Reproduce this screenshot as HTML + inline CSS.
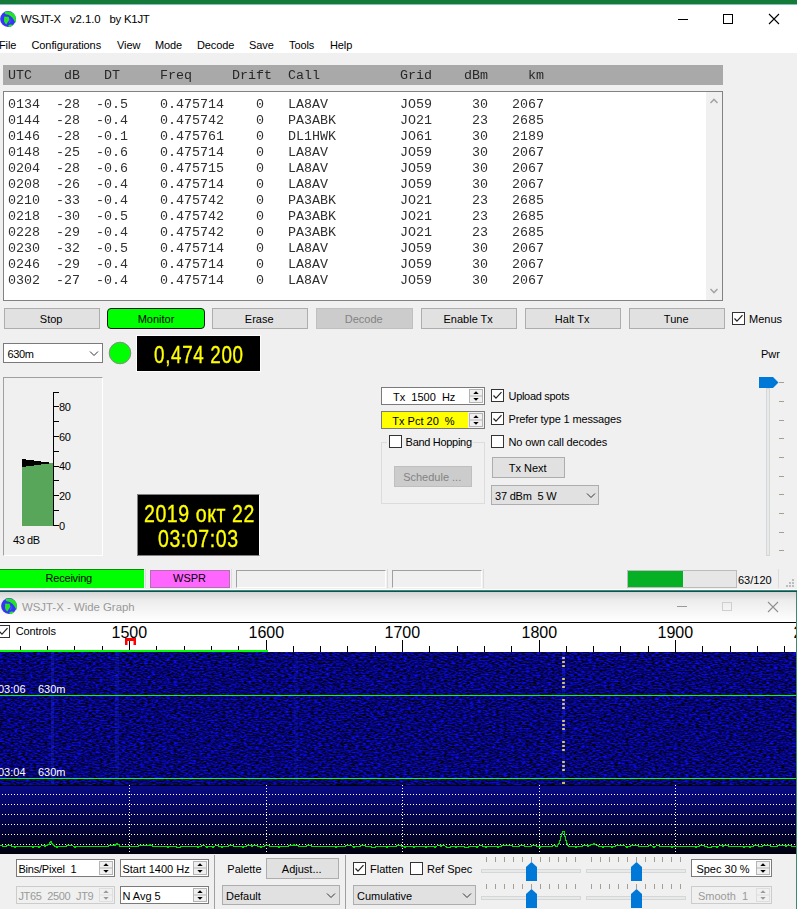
<!DOCTYPE html><html><head><meta charset="utf-8"><style>
html,body{margin:0;padding:0;}
body{width:797px;height:909px;position:relative;overflow:hidden;background:#f0f0f0;font-family:"Liberation Sans",sans-serif;}
.t{position:absolute;white-space:pre;}
.r{position:absolute;box-sizing:border-box;}
svg{position:absolute;}
</style></head><body>
<div class="r" style="left:0px;top:0px;width:797px;height:4px;background:#137a3a;"></div>
<div class="r" style="left:0px;top:4px;width:797px;height:49px;background:#ffffff;"></div>
<div class="r" style="left:0px;top:4px;width:797px;height:1px;background:#7cc0c4;"></div>
<svg style="left:0px;top:11px" width="16" height="16" viewBox="0 0 16 16">
<circle cx="8" cy="8" r="7.9" fill="#3535f5"/>
<path d="M4.5,1.2 C7.5,-0.3 12.5,0.6 15,4.2 C16,6.5 16.1,9.5 15.6,12 C14.6,10.5 13.8,8.5 12.6,7 C11.2,5 9,3.6 6.5,3.4 C5.5,3.3 4.6,2.5 4.5,1.2Z" fill="#22e622"/>
<path d="M4.2,5.8 C5.5,5 6.8,6.2 8,5.6 C9.3,6.3 9.6,8.6 8.8,9.8 C7.8,10.8 6.9,12.6 6.3,13.6 C5.2,12.6 4.1,11.2 4,9.2Z" fill="#22e622"/>
<path d="M8.2,14.6 C9.6,13 11.8,13.2 13.2,14 C12.2,15.4 10.4,16.1 9,16.1Z" fill="#22e622"/>
<path d="M9.5,8 C10.5,9 10.2,11 9.2,12" stroke="#7070ff" stroke-width="1" fill="none" opacity="0.6"/>
</svg>
<div class="t" style="left:21px;top:13.18px;font-size:11.4px;line-height:12.73px;color:#000;font-family:'Liberation Sans', sans-serif;letter-spacing:-0.35px;">WSJT-X</div>
<div class="t" style="left:70px;top:13.18px;font-size:11.4px;line-height:12.73px;color:#000;font-family:'Liberation Sans', sans-serif;letter-spacing:-0.1px;">v2.1.0</div>
<div class="t" style="left:109.5px;top:13.18px;font-size:11.4px;line-height:12.73px;color:#000;font-family:'Liberation Sans', sans-serif;letter-spacing:-0.25px;">by K1JT</div>
<div class="r" style="left:678px;top:19px;width:10px;height:1px;background:#000;"></div>
<div class="r" style="left:723px;top:14px;width:10px;height:10px;border:1px solid #000;"></div>
<svg style="left:768px;top:13px" width="12" height="12" viewBox="0 0 12 12"><path d="M1,1 L11,11 M11,1 L1,11" stroke="#000" stroke-width="1.1"/></svg>
<div class="t" style="left:-1px;top:38.75px;font-size:11px;line-height:12.29px;color:#000;font-family:'Liberation Sans', sans-serif;letter-spacing:-0.1px;">File</div>
<div class="t" style="left:31.5px;top:38.75px;font-size:11px;line-height:12.29px;color:#000;font-family:'Liberation Sans', sans-serif;letter-spacing:-0.1px;">Configurations</div>
<div class="t" style="left:117px;top:38.75px;font-size:11px;line-height:12.29px;color:#000;font-family:'Liberation Sans', sans-serif;letter-spacing:-0.1px;">View</div>
<div class="t" style="left:155px;top:38.75px;font-size:11px;line-height:12.29px;color:#000;font-family:'Liberation Sans', sans-serif;letter-spacing:-0.1px;">Mode</div>
<div class="t" style="left:197px;top:38.75px;font-size:11px;line-height:12.29px;color:#000;font-family:'Liberation Sans', sans-serif;letter-spacing:-0.1px;">Decode</div>
<div class="t" style="left:249px;top:38.75px;font-size:11px;line-height:12.29px;color:#000;font-family:'Liberation Sans', sans-serif;letter-spacing:-0.1px;">Save</div>
<div class="t" style="left:289px;top:38.75px;font-size:11px;line-height:12.29px;color:#000;font-family:'Liberation Sans', sans-serif;letter-spacing:-0.1px;">Tools</div>
<div class="t" style="left:330px;top:38.75px;font-size:11px;line-height:12.29px;color:#000;font-family:'Liberation Sans', sans-serif;letter-spacing:-0.1px;">Help</div>
<div class="r" style="left:3px;top:65px;width:720px;height:20px;background:#a9a9a9;"></div>
<div class="t" style="left:8px;top:68.10px;font-size:13.33px;line-height:15.10px;color:#282828;font-family:'Liberation Mono', monospace;transform:scaleY(0.9);transform-origin:0 100%;">UTC    dB   DT     Freq     Drift  Call          Grid    dBm     km</div>
<div class="r" style="left:3px;top:91px;width:720px;height:210px;background:#fff;border:1px solid #828282;"></div>
<div class="r" style="left:706px;top:92px;width:16px;height:208px;background:#f0f0f0;"></div>
<svg style="left:709px;top:97px" width="10" height="8" viewBox="0 0 10 8"><path d="M1.5,6 L5,2.5 L8.5,6" stroke="#a6a6a6" stroke-width="1.6" fill="none"/></svg>
<svg style="left:709px;top:287px" width="10" height="8" viewBox="0 0 10 8"><path d="M1.5,2 L5,5.5 L8.5,2" stroke="#a6a6a6" stroke-width="1.6" fill="none"/></svg>
<div class="t" style="left:8px;top:97.20px;font-size:13.33px;line-height:15.10px;color:#303030;font-family:'Liberation Mono', monospace;transform:scaleY(0.9);transform-origin:0 100%;">0134  -28  -0.5    0.475714    0   LA8AV         JO59     30   2067</div>
<div class="t" style="left:8px;top:113.20px;font-size:13.33px;line-height:15.10px;color:#303030;font-family:'Liberation Mono', monospace;transform:scaleY(0.9);transform-origin:0 100%;">0144  -28  -0.4    0.475742    0   PA3ABK        JO21     23   2685</div>
<div class="t" style="left:8px;top:129.20px;font-size:13.33px;line-height:15.10px;color:#303030;font-family:'Liberation Mono', monospace;transform:scaleY(0.9);transform-origin:0 100%;">0146  -28  -0.1    0.475761    0   DL1HWK        JO61     30   2189</div>
<div class="t" style="left:8px;top:145.20px;font-size:13.33px;line-height:15.10px;color:#303030;font-family:'Liberation Mono', monospace;transform:scaleY(0.9);transform-origin:0 100%;">0148  -25  -0.6    0.475714    0   LA8AV         JO59     30   2067</div>
<div class="t" style="left:8px;top:161.20px;font-size:13.33px;line-height:15.10px;color:#303030;font-family:'Liberation Mono', monospace;transform:scaleY(0.9);transform-origin:0 100%;">0204  -28  -0.6    0.475715    0   LA8AV         JO59     30   2067</div>
<div class="t" style="left:8px;top:177.20px;font-size:13.33px;line-height:15.10px;color:#303030;font-family:'Liberation Mono', monospace;transform:scaleY(0.9);transform-origin:0 100%;">0208  -26  -0.4    0.475714    0   LA8AV         JO59     30   2067</div>
<div class="t" style="left:8px;top:193.20px;font-size:13.33px;line-height:15.10px;color:#303030;font-family:'Liberation Mono', monospace;transform:scaleY(0.9);transform-origin:0 100%;">0210  -33  -0.4    0.475742    0   PA3ABK        JO21     23   2685</div>
<div class="t" style="left:8px;top:209.20px;font-size:13.33px;line-height:15.10px;color:#303030;font-family:'Liberation Mono', monospace;transform:scaleY(0.9);transform-origin:0 100%;">0218  -30  -0.5    0.475742    0   PA3ABK        JO21     23   2685</div>
<div class="t" style="left:8px;top:225.20px;font-size:13.33px;line-height:15.10px;color:#303030;font-family:'Liberation Mono', monospace;transform:scaleY(0.9);transform-origin:0 100%;">0228  -29  -0.4    0.475742    0   PA3ABK        JO21     23   2685</div>
<div class="t" style="left:8px;top:241.20px;font-size:13.33px;line-height:15.10px;color:#303030;font-family:'Liberation Mono', monospace;transform:scaleY(0.9);transform-origin:0 100%;">0230  -32  -0.5    0.475714    0   LA8AV         JO59     30   2067</div>
<div class="t" style="left:8px;top:257.20px;font-size:13.33px;line-height:15.10px;color:#303030;font-family:'Liberation Mono', monospace;transform:scaleY(0.9);transform-origin:0 100%;">0246  -29  -0.4    0.475714    0   LA8AV         JO59     30   2067</div>
<div class="t" style="left:8px;top:273.20px;font-size:13.33px;line-height:15.10px;color:#303030;font-family:'Liberation Mono', monospace;transform:scaleY(0.9);transform-origin:0 100%;">0302  -27  -0.4    0.475714    0   LA8AV         JO59     30   2067</div>
<div class="r" style="left:4px;top:308px;width:96px;height:21px;background:#e1e1e1;border:1px solid #adadad;"></div>
<div class="t" style="left:3.200000000000003px;width:96px;text-align:center;top:312.55px;font-size:11px;line-height:12.29px;color:#000;font-family:'Liberation Sans', sans-serif;">Stop</div>
<div class="r" style="left:107px;top:308px;width:98px;height:21px;background:#00ff00;border:1px solid #1a1a1a;border-radius:4px;"></div>
<div class="t" style="left:107.0px;width:98px;text-align:center;top:312.55px;font-size:11px;line-height:12.29px;color:#000;font-family:'Liberation Sans', sans-serif;">Monitor</div>
<div class="r" style="left:212px;top:308px;width:96px;height:21px;background:#e1e1e1;border:1px solid #adadad;"></div>
<div class="t" style="left:211.2px;width:96px;text-align:center;top:312.55px;font-size:11px;line-height:12.29px;color:#000;font-family:'Liberation Sans', sans-serif;">Erase</div>
<div class="r" style="left:316px;top:308px;width:97px;height:21px;background:#cccccc;border:1px solid #bfbfbf;"></div>
<div class="t" style="left:315.2px;width:97px;text-align:center;top:312.55px;font-size:11px;line-height:12.29px;color:#838383;font-family:'Liberation Sans', sans-serif;">Decode</div>
<div class="r" style="left:421px;top:308px;width:96px;height:21px;background:#e1e1e1;border:1px solid #adadad;"></div>
<div class="t" style="left:420.2px;width:96px;text-align:center;top:312.55px;font-size:11px;line-height:12.29px;color:#000;font-family:'Liberation Sans', sans-serif;">Enable Tx</div>
<div class="r" style="left:525px;top:308px;width:96px;height:21px;background:#e1e1e1;border:1px solid #adadad;"></div>
<div class="t" style="left:524.2px;width:96px;text-align:center;top:312.55px;font-size:11px;line-height:12.29px;color:#000;font-family:'Liberation Sans', sans-serif;">Halt Tx</div>
<div class="r" style="left:629px;top:308px;width:96px;height:21px;background:#e1e1e1;border:1px solid #adadad;"></div>
<div class="t" style="left:628.2px;width:96px;text-align:center;top:312.55px;font-size:11px;line-height:12.29px;color:#000;font-family:'Liberation Sans', sans-serif;">Tune</div>
<div class="r" style="left:732px;top:312px;width:13px;height:13px;background:#fff;border:1px solid #333;"></div>
<svg style="left:732px;top:312px" width="13" height="13" viewBox="0 0 13 13"><path d="M2.5,6.5 L5,9.2 L10.5,3.2" stroke="#222" stroke-width="1.2" fill="none"/></svg>
<div class="t" style="left:749px;top:312.75px;font-size:11px;line-height:12.29px;color:#000;font-family:'Liberation Sans', sans-serif;">Menus</div>
<div class="r" style="left:3px;top:343px;width:100px;height:20px;background:#fff;border:1px solid #7a7a7a;"></div>
<div class="t" style="left:7.4px;top:347.85px;font-size:11px;line-height:12.29px;color:#000;font-family:'Liberation Sans', sans-serif;letter-spacing:-0.3px;">630m</div>
<svg style="left:89px;top:350px" width="10" height="7" viewBox="0 0 10 7"><path d="M1,1.5 L5,5.5 L9,1.5" stroke="#333" stroke-width="1" fill="none"/></svg>
<svg style="left:108px;top:341px" width="24" height="24" viewBox="0 0 24 24"><circle cx="12" cy="12" r="10.8" fill="#00ff00" stroke="#8a8a8a" stroke-width="1"/></svg>
<div class="r" style="left:136px;top:335px;width:125px;height:37px;background:#000;border:1px solid #fdfdfd;"></div>
<div class="t" style="left:153.5px;top:341.73px;font-size:23.5px;line-height:26.25px;color:#ffff00;font-family:'Liberation Sans', sans-serif;letter-spacing:0.85px;-webkit-text-stroke:0.35px #ffff00;transform:scaleX(0.8);transform-origin:0 0;">0,474 200</div>
<div class="t" style="left:761px;top:348.05px;font-size:11px;line-height:12.29px;color:#000;font-family:'Liberation Sans', sans-serif;">Pwr</div>
<div class="r" style="left:3px;top:377px;width:100px;height:179px;border-top:1px solid #a0a0a0;border-left:1px solid #a0a0a0;border-right:1px solid #fff;border-bottom:1px solid #fff;"></div>
<div class="r" style="left:22px;top:467px;width:4px;height:58.60000000000002px;background:#58a65a;"></div>
<div class="r" style="left:22px;top:459px;width:4px;height:8px;background:#000;"></div>
<div class="r" style="left:26px;top:466px;width:8px;height:59.60000000000002px;background:#58a65a;"></div>
<div class="r" style="left:26px;top:459.6px;width:8px;height:6.399999999999977px;background:#000;"></div>
<div class="r" style="left:34px;top:465px;width:7px;height:60.60000000000002px;background:#58a65a;"></div>
<div class="r" style="left:34px;top:460.8px;width:7px;height:4.199999999999989px;background:#000;"></div>
<div class="r" style="left:41px;top:464px;width:8px;height:61.60000000000002px;background:#58a65a;"></div>
<div class="r" style="left:41px;top:462px;width:8px;height:2px;background:#000;"></div>
<div class="r" style="left:49px;top:463px;width:4px;height:62.60000000000002px;background:#58a65a;"></div>
<div class="r" style="left:52.8px;top:392px;width:1.3px;height:134px;background:#000;"></div>
<div class="r" style="left:54px;top:525px;width:4.5px;height:1.3px;background:#000;"></div>
<div class="r" style="left:54px;top:510px;width:4.5px;height:1.3px;background:#000;"></div>
<div class="r" style="left:54px;top:495px;width:4.5px;height:1.3px;background:#000;"></div>
<div class="r" style="left:54px;top:480px;width:4.5px;height:1.3px;background:#000;"></div>
<div class="r" style="left:54px;top:466px;width:4.5px;height:1.3px;background:#000;"></div>
<div class="r" style="left:54px;top:451px;width:4.5px;height:1.3px;background:#000;"></div>
<div class="r" style="left:54px;top:436px;width:4.5px;height:1.3px;background:#000;"></div>
<div class="r" style="left:54px;top:421px;width:4.5px;height:1.3px;background:#000;"></div>
<div class="r" style="left:54px;top:406px;width:4.5px;height:1.3px;background:#000;"></div>
<div class="r" style="left:54px;top:392px;width:4.5px;height:1.3px;background:#000;"></div>
<div class="r" style="left:54px;top:391.5px;width:4.5px;height:1.6px;background:#000;"></div>
<div class="t" style="left:59px;top:519.64px;font-size:11px;line-height:12.29px;color:#000;font-family:'Liberation Sans', sans-serif;letter-spacing:-0.3px;">0</div>
<div class="t" style="left:59px;top:490.05px;font-size:11px;line-height:12.29px;color:#000;font-family:'Liberation Sans', sans-serif;letter-spacing:-0.3px;">20</div>
<div class="t" style="left:59px;top:460.45px;font-size:11px;line-height:12.29px;color:#000;font-family:'Liberation Sans', sans-serif;letter-spacing:-0.3px;">40</div>
<div class="t" style="left:59px;top:430.85px;font-size:11px;line-height:12.29px;color:#000;font-family:'Liberation Sans', sans-serif;letter-spacing:-0.3px;">60</div>
<div class="t" style="left:59px;top:401.25px;font-size:11px;line-height:12.29px;color:#000;font-family:'Liberation Sans', sans-serif;letter-spacing:-0.3px;">80</div>
<div class="t" style="left:13px;top:534.04px;font-size:11px;line-height:12.29px;color:#000;font-family:'Liberation Sans', sans-serif;letter-spacing:-0.4px;">43 dB</div>
<div class="r" style="left:137px;top:494px;width:123px;height:62px;background:#000;border:1px solid #808080;border-right-color:#fff;"></div>
<div class="t" style="left:143.5px;top:500.73px;font-size:23.5px;line-height:26.25px;color:#ffff00;font-family:'Liberation Sans', sans-serif;letter-spacing:0.7px;-webkit-text-stroke:0.35px #ffff00;transform:scaleX(0.83);transform-origin:0 0;">2019 окт 22</div>
<div class="t" style="left:157.5px;top:525.93px;font-size:23.5px;line-height:26.25px;color:#ffff00;font-family:'Liberation Sans', sans-serif;letter-spacing:0.7px;-webkit-text-stroke:0.35px #ffff00;transform:scaleX(0.83);transform-origin:0 0;">03:07:03</div>
<div class="r" style="left:381px;top:387px;width:104px;height:18px;background:#fff;border:1px solid #7a7a7a;"></div>
<div class="t" style="left:393px;top:390.65px;font-size:11px;line-height:12.29px;color:#000;font-family:'Liberation Sans', sans-serif;">Tx  1500  Hz</div>
<svg style="left:469px;top:389px" width="14" height="14" viewBox="0 0 14 14"><rect x="0.5" y="0.5" width="13" height="13" fill="#f0f0f0" stroke="#b4b4b4"/><line x1="0.5" y1="7.0" x2="13.5" y2="7.0" stroke="#b4b4b4"/><path d="M4.3,5.0 L7,2.2 L9.7,5.0Z" fill="#000"/><path d="M4.3,9.0 L7,11.8 L9.7,9.0Z" fill="#000"/></svg>
<div class="r" style="left:381px;top:411px;width:104px;height:18px;background:#ffff00;border:1px solid #7a7a7a;"></div>
<div class="r" style="left:468px;top:412px;width:16px;height:16px;background:#f0f0f0;"></div>
<div class="t" style="left:392.3px;top:414.65px;font-size:11px;line-height:12.29px;color:#000;font-family:'Liberation Sans', sans-serif;">Tx Pct 20  %</div>
<svg style="left:469px;top:413px" width="14" height="14" viewBox="0 0 14 14"><rect x="0.5" y="0.5" width="13" height="13" fill="#f0f0f0" stroke="#b4b4b4"/><line x1="0.5" y1="7.0" x2="13.5" y2="7.0" stroke="#b4b4b4"/><path d="M4.3,5.0 L7,2.2 L9.7,5.0Z" fill="#000"/><path d="M4.3,9.0 L7,11.8 L9.7,9.0Z" fill="#000"/></svg>
<div class="r" style="left:381px;top:442px;width:104px;height:62px;border:1px solid #dcdcdc;"></div>
<div class="r" style="left:387px;top:436px;width:86px;height:12px;background:#f0f0f0;"></div>
<div class="r" style="left:389px;top:435px;width:13px;height:13px;background:#fff;border:1px solid #333;"></div>
<div class="t" style="left:405.6px;top:435.85px;font-size:11px;line-height:12.29px;color:#000;font-family:'Liberation Sans', sans-serif;letter-spacing:-0.3px;">Band Hopping</div>
<div class="r" style="left:394px;top:466px;width:78px;height:21px;background:#cccccc;border:1px solid #bfbfbf;"></div>
<div class="t" style="left:393.2px;width:78px;text-align:center;top:470.55px;font-size:11px;line-height:12.29px;color:#838383;font-family:'Liberation Sans', sans-serif;">Schedule ...</div>
<div class="r" style="left:491px;top:389px;width:13px;height:13px;background:#fff;border:1px solid #333;"></div>
<svg style="left:491px;top:389px" width="13" height="13" viewBox="0 0 13 13"><path d="M2.5,6.5 L5,9.2 L10.5,3.2" stroke="#222" stroke-width="1.2" fill="none"/></svg>
<div class="t" style="left:508.5px;top:389.85px;font-size:11px;line-height:12.29px;color:#000;font-family:'Liberation Sans', sans-serif;letter-spacing:-0.3px;">Upload spots</div>
<div class="r" style="left:491px;top:412px;width:13px;height:13px;background:#fff;border:1px solid #333;"></div>
<svg style="left:491px;top:412px" width="13" height="13" viewBox="0 0 13 13"><path d="M2.5,6.5 L5,9.2 L10.5,3.2" stroke="#222" stroke-width="1.2" fill="none"/></svg>
<div class="t" style="left:508.5px;top:412.85px;font-size:11px;line-height:12.29px;color:#000;font-family:'Liberation Sans', sans-serif;letter-spacing:-0.15px;">Prefer type 1 messages</div>
<div class="r" style="left:491px;top:435px;width:13px;height:13px;background:#fff;border:1px solid #333;"></div>
<div class="t" style="left:508.5px;top:435.85px;font-size:11px;line-height:12.29px;color:#000;font-family:'Liberation Sans', sans-serif;letter-spacing:-0.15px;">No own call decodes</div>
<div class="r" style="left:492px;top:457px;width:73px;height:21px;background:#e1e1e1;border:1px solid #adadad;"></div>
<div class="t" style="left:491.20000000000005px;width:73px;text-align:center;top:461.55px;font-size:11px;line-height:12.29px;color:#000;font-family:'Liberation Sans', sans-serif;">Tx Next</div>
<div class="r" style="left:491px;top:485px;width:108px;height:20px;background:#e1e1e1;border:1px solid #adadad;"></div>
<div class="t" style="left:495px;top:490.05px;font-size:11px;line-height:12.29px;color:#000;font-family:'Liberation Sans', sans-serif;letter-spacing:-0.2px;">37 dBm  5 W</div>
<svg style="left:586px;top:492px" width="10" height="7" viewBox="0 0 10 7"><path d="M1,1.5 L5,5.5 L9,1.5" stroke="#333" stroke-width="1" fill="none"/></svg>
<div class="r" style="left:766px;top:388px;width:4px;height:168px;background:#e7eaea;border:1px solid #d6d6d6;"></div>
<svg style="left:759px;top:377px" width="20" height="11" viewBox="0 0 20 11"><path d="M0,0 L14,0 L19.5,5.5 L14,11 L0,11Z" fill="#0078d7"/></svg>
<div class="r" style="left:779px;top:381.5px;width:5px;height:1.2px;background:#a39f92;"></div>
<div class="r" style="left:779px;top:400.5px;width:5px;height:1.2px;background:#a39f92;"></div>
<div class="r" style="left:779px;top:419.5px;width:5px;height:1.2px;background:#a39f92;"></div>
<div class="r" style="left:779px;top:437.5px;width:5px;height:1.2px;background:#a39f92;"></div>
<div class="r" style="left:779px;top:456.5px;width:5px;height:1.2px;background:#a39f92;"></div>
<div class="r" style="left:779px;top:475.5px;width:5px;height:1.2px;background:#a39f92;"></div>
<div class="r" style="left:779px;top:493.5px;width:5px;height:1.2px;background:#a39f92;"></div>
<div class="r" style="left:779px;top:512.5px;width:5px;height:1.2px;background:#a39f92;"></div>
<div class="r" style="left:779px;top:531.5px;width:5px;height:1.2px;background:#a39f92;"></div>
<div class="r" style="left:779px;top:549.5px;width:5px;height:1.2px;background:#a39f92;"></div>
<div class="r" style="left:0px;top:569px;width:144px;height:19px;background:#00ff00;border-top:1px solid #0b8a0b;"></div>
<div class="t" style="left:45.5px;top:572.04px;font-size:11px;line-height:12.29px;color:#000;font-family:'Liberation Sans', sans-serif;letter-spacing:-0.2px;">Receiving</div>
<div class="r" style="left:145px;top:569px;width:1px;height:19px;background:#dcdcdc;"></div>
<div class="r" style="left:150px;top:570px;width:80px;height:18px;background:#ff66ff;border:1px solid #b070b0;"></div>
<div class="t" style="left:149.5px;width:80px;text-align:center;top:572.04px;font-size:11px;line-height:12.29px;color:#000;font-family:'Liberation Sans', sans-serif;">WSPR</div>
<div class="r" style="left:231px;top:569px;width:1px;height:19px;background:#dcdcdc;"></div>
<div class="r" style="left:236px;top:570px;width:150px;height:18px;border-top:1px solid #a0a0a0;border-left:1px solid #a0a0a0;border-right:1px solid #fff;border-bottom:1px solid #fff;"></div>
<div class="r" style="left:387px;top:569px;width:1px;height:19px;background:#dcdcdc;"></div>
<div class="r" style="left:392px;top:570px;width:90px;height:18px;border-top:1px solid #a0a0a0;border-left:1px solid #a0a0a0;border-right:1px solid #fff;border-bottom:1px solid #fff;"></div>
<div class="r" style="left:483px;top:569px;width:1px;height:19px;background:#dcdcdc;"></div>
<div class="r" style="left:627px;top:570px;width:110px;height:18px;background:#e6e6e6;border:1px solid #bcbcbc;"></div>
<div class="r" style="left:628px;top:571px;width:55px;height:16px;background:#06b025;"></div>
<div class="t" style="left:738px;top:573.84px;font-size:11px;line-height:12.29px;color:#000;font-family:'Liberation Sans', sans-serif;">63/120</div>
<div class="r" style="left:778px;top:569px;width:1px;height:19px;background:#dcdcdc;"></div>
<div class="r" style="left:792px;top:585px;width:2px;height:2px;background:#bdbdbd;"></div>
<div class="r" style="left:792px;top:582px;width:2px;height:2px;background:#bdbdbd;"></div>
<div class="r" style="left:792px;top:579px;width:2px;height:2px;background:#bdbdbd;"></div>
<div class="r" style="left:789px;top:585px;width:2px;height:2px;background:#bdbdbd;"></div>
<div class="r" style="left:789px;top:582px;width:2px;height:2px;background:#bdbdbd;"></div>
<div class="r" style="left:786px;top:585px;width:2px;height:2px;background:#bdbdbd;"></div>
<div class="r" style="left:0px;top:589px;width:797px;height:1px;background:#fff;"></div>
<div class="r" style="left:0px;top:590px;width:797px;height:1px;background:#2b8f8a;"></div>
<div class="r" style="left:0px;top:591px;width:797px;height:1px;background:#1d4d45;"></div>
<div class="r" style="left:0;top:592px;width:797px;height:30px;background:linear-gradient(#d4d4d4 0px,#ececec 8px,#ffffff 30px);"></div>
<svg style="left:1px;top:598px" width="16" height="16" viewBox="0 0 16 16">
<circle cx="8" cy="8" r="7.9" fill="#3535f5"/>
<path d="M4.5,1.2 C7.5,-0.3 12.5,0.6 15,4.2 C16,6.5 16.1,9.5 15.6,12 C14.6,10.5 13.8,8.5 12.6,7 C11.2,5 9,3.6 6.5,3.4 C5.5,3.3 4.6,2.5 4.5,1.2Z" fill="#22e622"/>
<path d="M4.2,5.8 C5.5,5 6.8,6.2 8,5.6 C9.3,6.3 9.6,8.6 8.8,9.8 C7.8,10.8 6.9,12.6 6.3,13.6 C5.2,12.6 4.1,11.2 4,9.2Z" fill="#22e622"/>
<path d="M8.2,14.6 C9.6,13 11.8,13.2 13.2,14 C12.2,15.4 10.4,16.1 9,16.1Z" fill="#22e622"/>
<path d="M9.5,8 C10.5,9 10.2,11 9.2,12" stroke="#7070ff" stroke-width="1" fill="none" opacity="0.6"/>
</svg>
<div class="t" style="left:22px;top:600.68px;font-size:11.4px;line-height:12.73px;color:#999999;font-family:'Liberation Sans', sans-serif;">WSJT-X - Wide Graph</div>
<div class="r" style="left:677px;top:606px;width:10px;height:1px;background:#999;"></div>
<div class="r" style="left:722px;top:602px;width:10px;height:9px;border:1px solid #cfcfcf;"></div>
<svg style="left:767px;top:601px" width="12" height="12" viewBox="0 0 12 12"><path d="M1,1 L11,11 M11,1 L1,11" stroke="#8f8f8f" stroke-width="1.1"/></svg>
<div class="r" style="left:796px;top:592px;width:1px;height:317px;background:#3d8a6e;"></div>
<div class="r" style="left:0px;top:622px;width:796px;height:1px;background:#000;"></div>
<div class="r" style="left:0px;top:623px;width:796px;height:29px;background:#fff;"></div>
<div class="r" style="left:-3px;top:625px;width:13px;height:13px;background:#fff;border:1px solid #333;"></div>
<svg style="left:-3px;top:625px" width="13" height="13" viewBox="0 0 13 13"><path d="M2.5,6.5 L5,9.2 L10.5,3.2" stroke="#222" stroke-width="1.2" fill="none"/></svg>
<div class="t" style="left:15.7px;top:624.84px;font-size:11px;line-height:12.29px;color:#000;font-family:'Liberation Sans', sans-serif;letter-spacing:-0.1px;">Controls</div>
<div class="r" style="left:20px;top:646px;width:1px;height:6px;background:#000;"></div>
<div class="r" style="left:47px;top:646px;width:1px;height:6px;background:#000;"></div>
<div class="r" style="left:74px;top:646px;width:1px;height:6px;background:#000;"></div>
<div class="r" style="left:102px;top:646px;width:1px;height:6px;background:#000;"></div>
<div class="r" style="left:129px;top:640px;width:1px;height:12px;background:#000;"></div>
<div class="t" style="left:111.5px;top:623.52px;font-size:16px;line-height:17.87px;color:#000;font-family:'Liberation Sans', sans-serif;">1500</div>
<div class="r" style="left:156px;top:646px;width:1px;height:6px;background:#000;"></div>
<div class="r" style="left:184px;top:646px;width:1px;height:6px;background:#000;"></div>
<div class="r" style="left:211px;top:646px;width:1px;height:6px;background:#000;"></div>
<div class="r" style="left:238px;top:646px;width:1px;height:6px;background:#000;"></div>
<div class="r" style="left:266px;top:640px;width:1px;height:12px;background:#000;"></div>
<div class="t" style="left:248.5px;top:623.52px;font-size:16px;line-height:17.87px;color:#000;font-family:'Liberation Sans', sans-serif;">1600</div>
<div class="r" style="left:293px;top:646px;width:1px;height:6px;background:#000;"></div>
<div class="r" style="left:320px;top:646px;width:1px;height:6px;background:#000;"></div>
<div class="r" style="left:347px;top:646px;width:1px;height:6px;background:#000;"></div>
<div class="r" style="left:375px;top:646px;width:1px;height:6px;background:#000;"></div>
<div class="r" style="left:402px;top:640px;width:1px;height:12px;background:#000;"></div>
<div class="t" style="left:384.5px;top:623.52px;font-size:16px;line-height:17.87px;color:#000;font-family:'Liberation Sans', sans-serif;">1700</div>
<div class="r" style="left:429px;top:646px;width:1px;height:6px;background:#000;"></div>
<div class="r" style="left:457px;top:646px;width:1px;height:6px;background:#000;"></div>
<div class="r" style="left:484px;top:646px;width:1px;height:6px;background:#000;"></div>
<div class="r" style="left:511px;top:646px;width:1px;height:6px;background:#000;"></div>
<div class="r" style="left:539px;top:640px;width:1px;height:12px;background:#000;"></div>
<div class="t" style="left:521.5px;top:623.52px;font-size:16px;line-height:17.87px;color:#000;font-family:'Liberation Sans', sans-serif;">1800</div>
<div class="r" style="left:566px;top:646px;width:1px;height:6px;background:#000;"></div>
<div class="r" style="left:593px;top:646px;width:1px;height:6px;background:#000;"></div>
<div class="r" style="left:620px;top:646px;width:1px;height:6px;background:#000;"></div>
<div class="r" style="left:648px;top:646px;width:1px;height:6px;background:#000;"></div>
<div class="r" style="left:675px;top:640px;width:1px;height:12px;background:#000;"></div>
<div class="t" style="left:657.5px;top:623.52px;font-size:16px;line-height:17.87px;color:#000;font-family:'Liberation Sans', sans-serif;">1900</div>
<div class="r" style="left:702px;top:646px;width:1px;height:6px;background:#000;"></div>
<div class="r" style="left:730px;top:646px;width:1px;height:6px;background:#000;"></div>
<div class="r" style="left:757px;top:646px;width:1px;height:6px;background:#000;"></div>
<div class="r" style="left:784px;top:646px;width:1px;height:6px;background:#000;"></div>
<div class="t" style="left:793.5px;top:623.52px;font-size:16px;line-height:17.87px;color:#000;font-family:'Liberation Sans', sans-serif;">2000</div>
<div class="r" style="left:796px;top:592px;width:1px;height:317px;background:#3d8a6e;"></div>
<div class="r" style="left:0px;top:650px;width:268px;height:2px;background:#00ff00;"></div>
<svg style="left:125px;top:638px" width="12" height="7" viewBox="0 0 12 7"><path d="M0,0 H11 V7 H8.5 V3 H2.5 V7 H0Z" fill="#ff0000"/></svg>
<svg style="left:0;top:652px" width="796" height="133" viewBox="0 0 796 133">
<defs><filter id="wf" x="0" y="0" width="100%" height="100%" color-interpolation-filters="sRGB">
<feTurbulence type="fractalNoise" baseFrequency="0.27 0.72" numOctaves="2" seed="7" result="n"/>
<feColorMatrix in="n" type="matrix" values="0.08 0 0 0 -0.02  0.1 0 0 0 -0.03  1.9 0 0 0 -0.5  0 0 0 0 1"/>
</filter></defs>
<rect width="796" height="133" fill="#000"/>
<rect width="796" height="133" filter="url(#wf)"/>
</svg>
<div class="r" style="left:50.5px;top:652px;width:3px;height:133px;background:rgba(30,50,255,0.3);"></div>
<div class="r" style="left:115px;top:652px;width:4px;height:133px;background:rgba(30,50,255,0.2);"></div>
<div class="r" style="left:293.5px;top:652px;width:4px;height:133px;background:rgba(30,50,255,0.15);"></div>
<div class="r" style="left:561.5px;top:652px;width:3px;height:133px;background:rgba(30,50,255,0.25);"></div>
<div class="r" style="left:0px;top:695px;width:796px;height:1.3px;background:#00ff00;"></div>
<div class="r" style="left:0px;top:778px;width:796px;height:1.3px;background:#00ff00;"></div>
<div class="t" style="left:-2px;top:682.64px;font-size:11px;line-height:12.29px;color:#fff;font-family:'Liberation Sans', sans-serif;">03:06</div>
<div class="t" style="left:38px;top:682.64px;font-size:11px;line-height:12.29px;color:#fff;font-family:'Liberation Sans', sans-serif;">630m</div>
<div class="t" style="left:-2px;top:765.64px;font-size:11px;line-height:12.29px;color:#fff;font-family:'Liberation Sans', sans-serif;">03:04</div>
<div class="t" style="left:38px;top:765.64px;font-size:11px;line-height:12.29px;color:#fff;font-family:'Liberation Sans', sans-serif;">630m</div>
<div class="r" style="left:561.5px;top:657.2px;width:3px;height:2.2px;background:#d6c86a;border-radius:0.8px;"></div>
<div class="r" style="left:561.5px;top:660.9000000000001px;width:3px;height:2.2px;background:#d6c86a;border-radius:0.8px;"></div>
<div class="r" style="left:561.5px;top:664.7px;width:3px;height:2.2px;background:#d6c86a;border-radius:0.8px;"></div>
<div class="r" style="left:561.5px;top:678px;width:3px;height:2.2px;background:#d6c86a;border-radius:0.8px;"></div>
<div class="r" style="left:561.5px;top:681.7px;width:3px;height:2.2px;background:#d6c86a;border-radius:0.8px;"></div>
<div class="r" style="left:561.5px;top:685.5px;width:3px;height:2.2px;background:#d6c86a;border-radius:0.8px;"></div>
<div class="r" style="left:561.5px;top:699px;width:3px;height:2.2px;background:#d6c86a;border-radius:0.8px;"></div>
<div class="r" style="left:561.5px;top:702.7px;width:3px;height:2.2px;background:#d6c86a;border-radius:0.8px;"></div>
<div class="r" style="left:561.5px;top:706.5px;width:3px;height:2.2px;background:#d6c86a;border-radius:0.8px;"></div>
<div class="r" style="left:561.5px;top:720px;width:3px;height:2.2px;background:#d6c86a;border-radius:0.8px;"></div>
<div class="r" style="left:561.5px;top:723.7px;width:3px;height:2.2px;background:#d6c86a;border-radius:0.8px;"></div>
<div class="r" style="left:561.5px;top:727.5px;width:3px;height:2.2px;background:#d6c86a;border-radius:0.8px;"></div>
<div class="r" style="left:561.5px;top:741px;width:3px;height:2.2px;background:#d6c86a;border-radius:0.8px;"></div>
<div class="r" style="left:561.5px;top:744.7px;width:3px;height:2.2px;background:#d6c86a;border-radius:0.8px;"></div>
<div class="r" style="left:561.5px;top:748.5px;width:3px;height:2.2px;background:#d6c86a;border-radius:0.8px;"></div>
<div class="r" style="left:561.5px;top:761px;width:3px;height:2.2px;background:#d6c86a;border-radius:0.8px;"></div>
<div class="r" style="left:561.5px;top:764.7px;width:3px;height:2.2px;background:#d6c86a;border-radius:0.8px;"></div>
<div class="r" style="left:561.5px;top:768.5px;width:3px;height:2.2px;background:#d6c86a;border-radius:0.8px;"></div>
<div class="r" style="left:561.5px;top:781.5px;width:3px;height:2px;background:#c8b860;"></div>
<div class="r" style="left:0;top:786px;width:796px;height:68px;background:linear-gradient(#080a84,#05054e 45%,#00000e);"></div>
<div class="r" style="left:0px;top:785px;width:796px;height:1px;background:#000;"></div>
<div class="r" style="left:0;top:794px;width:796px;height:1px;background:repeating-linear-gradient(90deg,transparent 0 2px,#fff 2px 3px);"></div>
<div class="r" style="left:0;top:804px;width:796px;height:1px;background:repeating-linear-gradient(90deg,transparent 0 2px,#fff 2px 3px);"></div>
<div class="r" style="left:0;top:814px;width:796px;height:1px;background:repeating-linear-gradient(90deg,transparent 0 2px,#fff 2px 3px);"></div>
<div class="r" style="left:0;top:824px;width:796px;height:1px;background:repeating-linear-gradient(90deg,transparent 0 2px,#fff 2px 3px);"></div>
<div class="r" style="left:0;top:834px;width:796px;height:1px;background:repeating-linear-gradient(90deg,transparent 0 2px,#fff 2px 3px);"></div>
<div class="r" style="left:0;top:844px;width:796px;height:1px;background:repeating-linear-gradient(90deg,transparent 0 2px,#fff 2px 3px);"></div>
<div class="r" style="left:129px;top:785px;width:1px;height:67px;background:repeating-linear-gradient(180deg,#fff 0 1px,transparent 1px 3px);"></div>
<div class="r" style="left:266px;top:785px;width:1px;height:67px;background:repeating-linear-gradient(180deg,#fff 0 1px,transparent 1px 3px);"></div>
<div class="r" style="left:402px;top:785px;width:1px;height:67px;background:repeating-linear-gradient(180deg,#fff 0 1px,transparent 1px 3px);"></div>
<div class="r" style="left:539px;top:785px;width:1px;height:67px;background:repeating-linear-gradient(180deg,#fff 0 1px,transparent 1px 3px);"></div>
<div class="r" style="left:675px;top:785px;width:1px;height:67px;background:repeating-linear-gradient(180deg,#fff 0 1px,transparent 1px 3px);"></div>
<svg style="left:0;top:826px" width="796" height="28" viewBox="0 0 796 28"><polyline points="0,19.30 3,20.30 6,20.30 9,19.30 12,20.30 15,21.30 18,20.30 21,20.30 24,20.30 27,20.30 30,20.30 33,21.30 36,20.30 39,21.30 42,19.30 45,20.30 48,18.60 49,18.33 50,16.64 51,15.80 52,17.64 53,18.33 54,19.60 57,21.30 60,20.30 63,20.30 66,20.30 69,19.30 72,19.30 75,21.30 78,20.30 81,20.30 84,20.30 87,20.30 90,20.30 93,20.30 96,20.30 99,20.30 102,20.30 105,20.30 108,20.30 111,19.25 113,19.88 114,19.38 115,18.70 116,19.06 117,17.80 118,18.06 119,18.70 120,20.38 123,20.25 126,20.30 129,20.30 132,20.30 135,20.30 138,20.30 141,19.30 144,19.28 147,19.52 150,18.93 153,20.30 156,20.30 159,20.30 162,20.30 165,20.30 168,21.30 171,20.30 174,20.30 177,21.30 180,21.30 183,20.30 186,20.30 189,20.30 192,20.30 195,20.30 198,21.30 201,20.30 204,19.30 207,21.30 210,20.30 213,21.30 216,19.30 219,20.30 222,21.30 225,20.30 228,20.30 231,19.30 234,20.30 237,20.30 240,20.30 243,21.30 246,20.30 249,19.30 252,20.30 255,19.30 258,20.30 261,21.30 264,20.30 267,19.30 270,20.30 273,20.30 276,20.30 279,21.30 282,20.30 285,20.30 288,20.30 291,19.30 294,18.93 297,19.52 300,20.28 303,20.30 306,20.30 309,19.30 312,20.30 315,20.30 318,20.30 321,20.30 324,20.30 327,20.30 330,20.30 333,20.30 336,21.30 339,20.30 342,20.30 345,20.30 348,19.30 351,19.30 354,21.30 357,20.30 360,20.30 363,19.30 366,20.30 369,20.30 372,21.30 375,21.30 378,20.30 381,20.30 384,20.30 387,21.30 390,20.30 393,20.30 396,20.30 399,19.30 402,20.30 405,21.30 408,20.30 411,20.30 414,21.30 417,20.30 420,20.30 423,20.30 426,21.30 429,20.30 432,20.30 435,21.30 438,19.30 441,20.30 444,19.30 447,21.30 450,21.30 453,20.30 456,21.30 459,20.30 462,20.30 465,21.30 468,21.30 471,20.30 474,20.30 477,21.30 480,19.30 483,20.30 486,21.30 489,20.30 492,20.30 495,20.30 498,21.30 501,20.30 504,19.30 507,19.30 510,19.30 513,20.30 516,20.30 519,20.30 522,19.30 525,20.30 528,20.30 531,20.30 534,19.30 537,20.30 540,21.30 543,20.30 546,20.30 549,20.30 552,20.30 555,19.29 556,20.24 557,21.03 558,18.37 559,17.76 560,14.78 561,10.68 562,7.88 563,5.30 564,5.88 565,10.68 566,14.78 567,17.76 568,19.37 569,21.03 570,20.24 573,20.30 576,21.30 579,20.30 582,20.30 585,19.30 588,20.29 591,18.71 594,17.80 597,19.71 600,20.29 603,21.30 606,20.30 609,20.30 612,21.30 615,20.30 618,19.30 621,19.30 624,19.30 627,21.30 630,20.30 633,19.30 636,19.30 639,20.30 642,20.30 645,20.30 648,20.30 651,19.30 654,21.30 657,19.30 660,20.30 663,20.30 666,20.30 669,20.30 672,21.30 675,20.30 678,20.30 681,20.30 684,20.30 687,20.30 690,20.30 693,20.30 696,21.30 699,20.30 702,19.30 705,20.30 708,21.30 711,21.30 714,20.30 717,21.30 720,19.30 723,20.30 726,19.30 729,20.30 732,20.30 735,20.30 738,20.30 741,20.30 744,21.30 747,20.30 750,21.30 753,20.30 756,19.30 759,20.30 762,20.30 765,19.30 768,19.30 771,20.30 774,20.30 777,20.30 780,19.30 783,19.30 786,20.30 789,19.30 792,20.30 795,20.30 798,20.30" stroke="#00e000" stroke-width="1.2" fill="none" shape-rendering="crispEdges"/></svg>
<div class="r" style="left:0px;top:854px;width:796px;height:55px;background:#f0f0f0;"></div>
<div class="r" style="left:16px;top:859px;width:99px;height:18px;background:#fff;border:1px solid #7a7a7a;"></div>
<div class="t" style="left:18.4px;top:863.04px;font-size:11px;line-height:12.29px;color:#000;font-family:'Liberation Sans', sans-serif;letter-spacing:-0.2px;">Bins/Pixel  1</div>
<svg style="left:99px;top:861px" width="14" height="14" viewBox="0 0 14 14"><rect x="0.5" y="0.5" width="13" height="13" fill="#f0f0f0" stroke="#b4b4b4"/><line x1="0.5" y1="7.0" x2="13.5" y2="7.0" stroke="#b4b4b4"/><path d="M4.3,5.0 L7,2.2 L9.7,5.0Z" fill="#000"/><path d="M4.3,9.0 L7,11.8 L9.7,9.0Z" fill="#000"/></svg>
<div class="r" style="left:16px;top:886px;width:99px;height:18px;background:#f0f0f0;border:1px solid #cccccc;"></div>
<div class="t" style="left:18.4px;top:890.04px;font-size:11px;line-height:12.29px;color:#9a9a9a;font-family:'Liberation Sans', sans-serif;letter-spacing:-0.3px;">JT65  2500  JT9</div>
<svg style="left:99px;top:888px" width="14" height="14" viewBox="0 0 14 14"><rect x="0.5" y="0.5" width="13" height="13" fill="#f0f0f0" stroke="#dedede"/><line x1="0.5" y1="7.0" x2="13.5" y2="7.0" stroke="#dedede"/><path d="M4.3,5.0 L7,2.2 L9.7,5.0Z" fill="#9a9a9a"/><path d="M4.3,9.0 L7,11.8 L9.7,9.0Z" fill="#9a9a9a"/></svg>
<div class="r" style="left:120px;top:859px;width:89px;height:18px;background:#fff;border:1px solid #7a7a7a;"></div>
<div class="t" style="left:122.4px;top:863.04px;font-size:11px;line-height:12.29px;color:#000;font-family:'Liberation Sans', sans-serif;">Start 1400 Hz</div>
<svg style="left:193px;top:861px" width="14" height="14" viewBox="0 0 14 14"><rect x="0.5" y="0.5" width="13" height="13" fill="#f0f0f0" stroke="#b4b4b4"/><line x1="0.5" y1="7.0" x2="13.5" y2="7.0" stroke="#b4b4b4"/><path d="M4.3,5.0 L7,2.2 L9.7,5.0Z" fill="#000"/><path d="M4.3,9.0 L7,11.8 L9.7,9.0Z" fill="#000"/></svg>
<div class="r" style="left:120px;top:886px;width:89px;height:18px;background:#fff;border:1px solid #7a7a7a;"></div>
<div class="t" style="left:122.4px;top:890.04px;font-size:11px;line-height:12.29px;color:#000;font-family:'Liberation Sans', sans-serif;">N Avg 5</div>
<svg style="left:193px;top:888px" width="14" height="14" viewBox="0 0 14 14"><rect x="0.5" y="0.5" width="13" height="13" fill="#f0f0f0" stroke="#b4b4b4"/><line x1="0.5" y1="7.0" x2="13.5" y2="7.0" stroke="#b4b4b4"/><path d="M4.3,5.0 L7,2.2 L9.7,5.0Z" fill="#000"/><path d="M4.3,9.0 L7,11.8 L9.7,9.0Z" fill="#000"/></svg>
<div class="r" style="left:214px;top:855px;width:1px;height:54px;background:#a0a0a0;"></div>
<div class="t" style="left:227.3px;top:863.25px;font-size:11px;line-height:12.29px;color:#000;font-family:'Liberation Sans', sans-serif;">Palette</div>
<div class="r" style="left:266px;top:858px;width:73px;height:21px;background:#e1e1e1;border:1px solid #adadad;"></div>
<div class="t" style="left:265.2px;width:73px;text-align:center;top:862.54px;font-size:11px;line-height:12.29px;color:#000;font-family:'Liberation Sans', sans-serif;">Adjust...</div>
<div class="r" style="left:222px;top:885px;width:118px;height:20px;background:#e1e1e1;border:1px solid #adadad;"></div>
<div class="t" style="left:226px;top:890.04px;font-size:11px;line-height:12.29px;color:#000;font-family:'Liberation Sans', sans-serif;">Default</div>
<svg style="left:326px;top:892px" width="10" height="7" viewBox="0 0 10 7"><path d="M1,1.5 L5,5.5 L9,1.5" stroke="#333" stroke-width="1" fill="none"/></svg>
<div class="r" style="left:345px;top:855px;width:1px;height:54px;background:#a0a0a0;"></div>
<div class="r" style="left:353px;top:862px;width:13px;height:13px;background:#fff;border:1px solid #333;"></div>
<svg style="left:353px;top:862px" width="13" height="13" viewBox="0 0 13 13"><path d="M2.5,6.5 L5,9.2 L10.5,3.2" stroke="#222" stroke-width="1.2" fill="none"/></svg>
<div class="t" style="left:370px;top:863.04px;font-size:11px;line-height:12.29px;color:#000;font-family:'Liberation Sans', sans-serif;">Flatten</div>
<div class="r" style="left:410px;top:862px;width:13px;height:13px;background:#fff;border:1px solid #333;"></div>
<div class="t" style="left:427px;top:863.04px;font-size:11px;line-height:12.29px;color:#000;font-family:'Liberation Sans', sans-serif;">Ref Spec</div>
<div class="r" style="left:353px;top:885px;width:123px;height:20px;background:#e1e1e1;border:1px solid #adadad;"></div>
<div class="t" style="left:357px;top:890.04px;font-size:11px;line-height:12.29px;color:#000;font-family:'Liberation Sans', sans-serif;">Cumulative</div>
<svg style="left:462px;top:892px" width="10" height="7" viewBox="0 0 10 7"><path d="M1,1.5 L5,5.5 L9,1.5" stroke="#333" stroke-width="1" fill="none"/></svg>
<div class="r" style="left:486px;top:857px;width:1px;height:5px;background:#a39f92;"></div>
<div class="r" style="left:495px;top:857px;width:1px;height:5px;background:#a39f92;"></div>
<div class="r" style="left:504px;top:857px;width:1px;height:5px;background:#a39f92;"></div>
<div class="r" style="left:513px;top:857px;width:1px;height:5px;background:#a39f92;"></div>
<div class="r" style="left:522px;top:857px;width:1px;height:5px;background:#a39f92;"></div>
<div class="r" style="left:531px;top:857px;width:1px;height:5px;background:#a39f92;"></div>
<div class="r" style="left:540px;top:857px;width:1px;height:5px;background:#a39f92;"></div>
<div class="r" style="left:549px;top:857px;width:1px;height:5px;background:#a39f92;"></div>
<div class="r" style="left:558px;top:857px;width:1px;height:5px;background:#a39f92;"></div>
<div class="r" style="left:566px;top:857px;width:1px;height:5px;background:#a39f92;"></div>
<div class="r" style="left:575px;top:857px;width:1px;height:5px;background:#a39f92;"></div>
<div class="r" style="left:481px;top:869px;width:100px;height:4px;background:#e7eaea;border:1px solid #d6d6d6;"></div>
<svg style="left:526px;top:862px" width="11" height="19" viewBox="0 0 11 19"><path d="M5.5,0 L11,5 L11,19 L0,19 L0,5Z" fill="#0078d7"/></svg>
<div class="r" style="left:486px;top:884px;width:1px;height:5px;background:#a39f92;"></div>
<div class="r" style="left:495px;top:884px;width:1px;height:5px;background:#a39f92;"></div>
<div class="r" style="left:504px;top:884px;width:1px;height:5px;background:#a39f92;"></div>
<div class="r" style="left:513px;top:884px;width:1px;height:5px;background:#a39f92;"></div>
<div class="r" style="left:522px;top:884px;width:1px;height:5px;background:#a39f92;"></div>
<div class="r" style="left:531px;top:884px;width:1px;height:5px;background:#a39f92;"></div>
<div class="r" style="left:540px;top:884px;width:1px;height:5px;background:#a39f92;"></div>
<div class="r" style="left:549px;top:884px;width:1px;height:5px;background:#a39f92;"></div>
<div class="r" style="left:558px;top:884px;width:1px;height:5px;background:#a39f92;"></div>
<div class="r" style="left:566px;top:884px;width:1px;height:5px;background:#a39f92;"></div>
<div class="r" style="left:575px;top:884px;width:1px;height:5px;background:#a39f92;"></div>
<div class="r" style="left:481px;top:896px;width:100px;height:4px;background:#e7eaea;border:1px solid #d6d6d6;"></div>
<svg style="left:526px;top:889px" width="11" height="19" viewBox="0 0 11 19"><path d="M5.5,0 L11,5 L11,19 L0,19 L0,5Z" fill="#0078d7"/></svg>
<div class="r" style="left:591px;top:857px;width:1px;height:5px;background:#a39f92;"></div>
<div class="r" style="left:600px;top:857px;width:1px;height:5px;background:#a39f92;"></div>
<div class="r" style="left:609px;top:857px;width:1px;height:5px;background:#a39f92;"></div>
<div class="r" style="left:618px;top:857px;width:1px;height:5px;background:#a39f92;"></div>
<div class="r" style="left:627px;top:857px;width:1px;height:5px;background:#a39f92;"></div>
<div class="r" style="left:636px;top:857px;width:1px;height:5px;background:#a39f92;"></div>
<div class="r" style="left:645px;top:857px;width:1px;height:5px;background:#a39f92;"></div>
<div class="r" style="left:654px;top:857px;width:1px;height:5px;background:#a39f92;"></div>
<div class="r" style="left:662px;top:857px;width:1px;height:5px;background:#a39f92;"></div>
<div class="r" style="left:671px;top:857px;width:1px;height:5px;background:#a39f92;"></div>
<div class="r" style="left:680px;top:857px;width:1px;height:5px;background:#a39f92;"></div>
<div class="r" style="left:586px;top:869px;width:100px;height:4px;background:#e7eaea;border:1px solid #d6d6d6;"></div>
<svg style="left:631px;top:862px" width="11" height="19" viewBox="0 0 11 19"><path d="M5.5,0 L11,5 L11,19 L0,19 L0,5Z" fill="#0078d7"/></svg>
<div class="r" style="left:591px;top:884px;width:1px;height:5px;background:#a39f92;"></div>
<div class="r" style="left:600px;top:884px;width:1px;height:5px;background:#a39f92;"></div>
<div class="r" style="left:609px;top:884px;width:1px;height:5px;background:#a39f92;"></div>
<div class="r" style="left:618px;top:884px;width:1px;height:5px;background:#a39f92;"></div>
<div class="r" style="left:627px;top:884px;width:1px;height:5px;background:#a39f92;"></div>
<div class="r" style="left:636px;top:884px;width:1px;height:5px;background:#a39f92;"></div>
<div class="r" style="left:645px;top:884px;width:1px;height:5px;background:#a39f92;"></div>
<div class="r" style="left:654px;top:884px;width:1px;height:5px;background:#a39f92;"></div>
<div class="r" style="left:662px;top:884px;width:1px;height:5px;background:#a39f92;"></div>
<div class="r" style="left:671px;top:884px;width:1px;height:5px;background:#a39f92;"></div>
<div class="r" style="left:680px;top:884px;width:1px;height:5px;background:#a39f92;"></div>
<div class="r" style="left:586px;top:896px;width:100px;height:4px;background:#e7eaea;border:1px solid #d6d6d6;"></div>
<svg style="left:631px;top:889px" width="11" height="19" viewBox="0 0 11 19"><path d="M5.5,0 L11,5 L11,19 L0,19 L0,5Z" fill="#0078d7"/></svg>
<div class="r" style="left:691px;top:859px;width:81px;height:18px;background:#fff;border:1px solid #7a7a7a;"></div>
<div class="t" style="left:696.4px;top:863.04px;font-size:11px;line-height:12.29px;color:#000;font-family:'Liberation Sans', sans-serif;">Spec 30 %</div>
<svg style="left:756px;top:861px" width="14" height="14" viewBox="0 0 14 14"><rect x="0.5" y="0.5" width="13" height="13" fill="#f0f0f0" stroke="#b4b4b4"/><line x1="0.5" y1="7.0" x2="13.5" y2="7.0" stroke="#b4b4b4"/><path d="M4.3,5.0 L7,2.2 L9.7,5.0Z" fill="#000"/><path d="M4.3,9.0 L7,11.8 L9.7,9.0Z" fill="#000"/></svg>
<div class="r" style="left:691px;top:886px;width:81px;height:18px;background:#f0f0f0;border:1px solid #cccccc;"></div>
<div class="t" style="left:698px;top:890.04px;font-size:11px;line-height:12.29px;color:#9a9a9a;font-family:'Liberation Sans', sans-serif;">Smooth  1</div>
<svg style="left:756px;top:888px" width="14" height="14" viewBox="0 0 14 14"><rect x="0.5" y="0.5" width="13" height="13" fill="#f0f0f0" stroke="#dedede"/><line x1="0.5" y1="7.0" x2="13.5" y2="7.0" stroke="#dedede"/><path d="M4.3,5.0 L7,2.2 L9.7,5.0Z" fill="#9a9a9a"/><path d="M4.3,9.0 L7,11.8 L9.7,9.0Z" fill="#9a9a9a"/></svg>
</body></html>
